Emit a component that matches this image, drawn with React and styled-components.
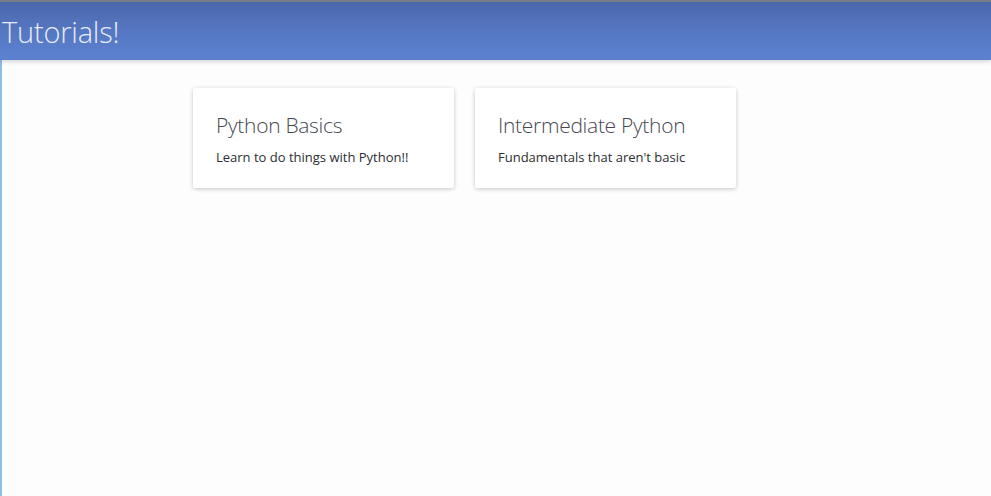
import styled, { createGlobalStyle } from "styled-components";

const GlobalStyle = createGlobalStyle`
    html, body {
        margin: 0;
        padding: 0;
        background: #fdfdfd;
        font-family: "Open Sans", "Noto Sans", sans-serif;
    }
`

const Page = styled.div`
    height: 496px;
    display: flex;
    flex-direction: column;
    overflow: hidden;
`

const Header = styled.header`
    height: 58px;
    border-top: 2px solid #7a7d85;
    background: linear-gradient(to bottom, #4a67ab 0%, #5677c2 50%, #5b82d0 100%);
    display: flex;
    align-items: center;
    box-shadow: 0 2px 4px rgba(0, 0, 0, 0.15);
    position: relative;
    z-index: 1;
`

const Title = styled.h1`
    margin: 0 0 0 2px;
    font-size: 29px;
    font-weight: 300;
    color: #e6ebf5;
    letter-spacing: -0.2px;
`

const Body = styled.main`
    flex: 1;
    border-left: 2px solid #8fbbe6;
    display: flex;
    justify-content: flex-start;
    gap: 21px;
    padding: 28px 0 0 191px;
`

const Card = styled.div`
    width: 261px;
    height: 100px;
    box-sizing: border-box;
    padding: 23px 23px;
    background: #fff;
    border-radius: 2px;
    box-shadow: 0 1px 4px rgba(0, 0, 0, 0.22);
`

const CardTitle = styled.h2`
    margin: 0;
    font-size: 21px;
    font-weight: 300;
    color: #454850;
    line-height: 28px;
    letter-spacing: -0.3px;
`

const CardText = styled.p`
    margin: 9px 0 0;
    font-size: 13px;
    color: #2c2e33;
    line-height: 18px;
`

const tutorials = [
    { title: "Python Basics", text: "Learn to do things with Python!!" },
    { title: "Intermediate Python", text: "Fundamentals that aren't basic" },
]

export default function App() {
    return (
        <Page>
            <GlobalStyle />
            <Header>
                <Title>Tutorials!</Title>
            </Header>
            <Body>
                {tutorials.map((t) => (
                    <Card key={t.title}>
                        <CardTitle>{t.title}</CardTitle>
                        <CardText>{t.text}</CardText>
                    </Card>
                ))}
            </Body>
        </Page>
    )
}
